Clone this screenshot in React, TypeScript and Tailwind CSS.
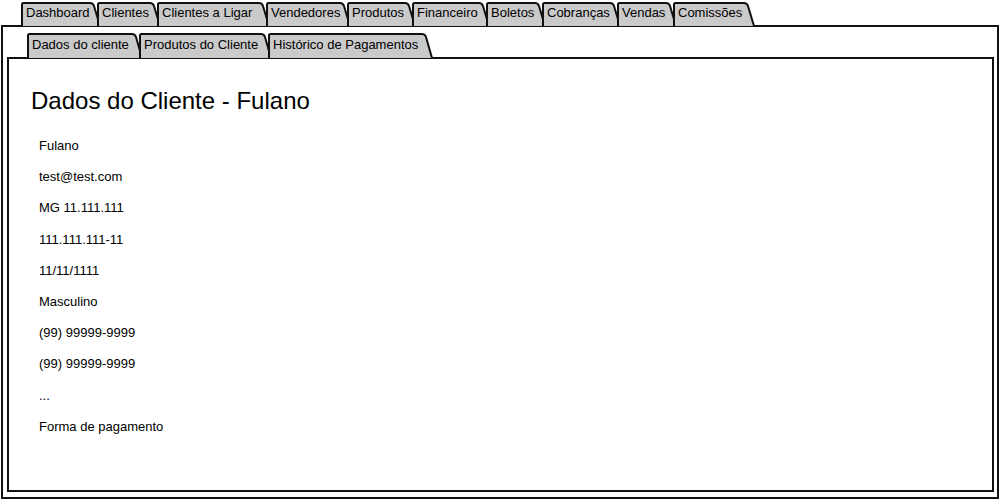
import React from "react";

type TabProps = { label: string; width: number; height: number; last?: boolean };

function Tab({ label, width, height, last }: TabProps) {
  const W = width;
  const H = height;
  const d = `M1 ${H + 1} L1 2.5 Q1 1 2.5 1 L${W - 11} 1 Q${W - 8} 1 ${W - 7} 4 L${W - 1} ${H + 1}`;
  return (
    <div
      className={`relative shrink-0 ${last ? "" : "-mr-[4px]"}`}
      style={{ width: W, height: H }}
    >
      <svg
        className="absolute left-0 top-0 overflow-visible"
        width={W}
        height={H}
        viewBox={`0 0 ${W} ${H}`}
      >
        <path d={d} fill="#cacaca" stroke="#111" strokeWidth={2} strokeLinejoin="round" />
      </svg>
      <span className="relative flex h-full items-center pl-[5px] pb-[2px] text-[13px] leading-none text-black whitespace-nowrap">
        {label}
      </span>
    </div>
  );
}

const outerTabs: [string, number][] = [
  ["Dashboard", 80],
  ["Clientes", 64],
  ["Clientes a Ligar", 113],
  ["Vendedores", 85],
  ["Produtos", 69],
  ["Financeiro", 78],
  ["Boletos", 60],
  ["Cobranças", 79],
  ["Vendas", 60],
  ["Comissões", 82],
];

const innerTabs: [string, number][] = [
  ["Dados do cliente", 116],
  ["Produtos do Cliente", 133],
  ["Histórico de Pagamentos", 165],
];

const rows = [
  "Fulano",
  "test@test.com",
  "MG 11.111.111",
  "111.111.111-11",
  "11/11/1111",
  "Masculino",
  "(99) 99999-9999",
  "(99) 99999-9999",
  "...",
  "Forma de pagamento",
];

export default function App() {
  return (
    <div
      className="flex h-[500px] w-[1000px] flex-col overflow-hidden bg-white pt-[2px] text-black"
      style={{ fontFamily: '"Liberation Sans", Arial, sans-serif' }}
    >
      <div className="flex h-[23px] shrink-0 items-end pl-[21px]">
        {outerTabs.map(([l, w], i) => (
          <Tab key={l} label={l} width={w} height={23} last={i === outerTabs.length - 1} />
        ))}
      </div>
      <div className="ml-[1px] flex h-[474px] w-[998px] flex-col border-2 border-[#111]">
        <div className="mt-[6px] flex h-[24px] shrink-0 pl-[24px]">
          {innerTabs.map(([l, w], i) => (
            <Tab key={l} label={l} width={w} height={24} last={i === innerTabs.length - 1} />
          ))}
        </div>
        <div className="mb-[5px] ml-[4px] mr-[3px] flex-1 border-2 border-[#111] pl-[22px] pt-[28px]">
          <h1 className="text-[24px] leading-[28px] font-normal">Dados do Cliente - Fulano</h1>
          <div className="mt-[15px] pl-[8px]">
            {rows.map((r, i) => (
              <div key={i} className="text-[13px] leading-[31.2px]">
                {r}
              </div>
            ))}
          </div>
        </div>
      </div>
    </div>
  );
}
